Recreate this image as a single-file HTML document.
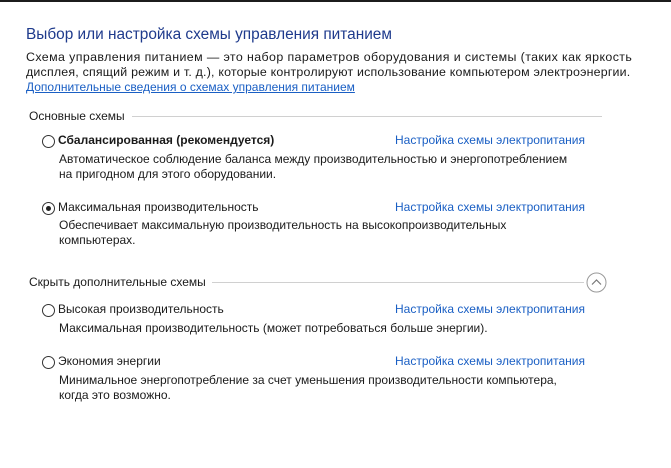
<!DOCTYPE html>
<html><head><meta charset="utf-8"><style>
body{margin:0;width:671px;height:468px;background:#fff;position:relative;overflow:hidden;font-family:"Liberation Sans","DejaVu Sans",sans-serif;font-size:12px;color:#1a1a1a}
.bar{position:absolute;left:0;top:0;width:671px;height:2px;background:#1c1c1c}
.t{position:absolute;white-space:nowrap;line-height:15px}
.h{color:#1e3a8c;font-size:15.4px;line-height:20px}
.p{font-size:12.4px;letter-spacing:0.4px}
.a{color:#1a5fc4}
.u{text-decoration:underline}
.rl{position:absolute;height:1px;background:#d0d0d0}
.r{position:absolute;width:11px;height:11px;border:1px solid #333;border-radius:50%;background:#fff}
.r.on::after{content:"";position:absolute;left:3px;top:3px;width:5px;height:5px;border-radius:50%;background:#222}
</style></head><body>
<div class="bar"></div>
<div class="t h" style="left:26px;top:25px">Выбор или настройка схемы управления питанием</div>
<div class="t p" style="left:26px;top:50px">Схема управления питанием — это набор параметров оборудования и системы (таких как яркость</div>
<div class="t p" style="left:26px;top:65px;letter-spacing:0.2px">дисплея, спящий режим и т. д.), которые контролируют использование компьютером электроэнергии.</div>
<div class="t a u" style="left:26px;top:80px">Дополнительные сведения о схемах управления питанием</div>

<div class="t" style="left:29px;top:109px">Основные схемы</div>
<div class="rl" style="left:132px;top:116px;width:470px"></div>

<div class="r" style="left:42px;top:135px"></div>
<div class="t" style="left:58px;top:133px;font-weight:bold">Сбалансированная (рекомендуется)</div>
<div class="t a" style="left:395px;top:133px">Настройка схемы электропитания</div>
<div class="t" style="left:59px;top:152px">Автоматическое соблюдение баланса между производительностью и энергопотреблением</div>
<div class="t" style="left:59px;top:167px">на пригодном для этого оборудовании.</div>

<div class="r on" style="left:42px;top:202px"></div>
<div class="t" style="left:58px;top:200px">Максимальная производительность</div>
<div class="t a" style="left:395px;top:200px">Настройка схемы электропитания</div>
<div class="t" style="left:59px;top:218px">Обеспечивает максимальную производительность на высокопроизводительных</div>
<div class="t" style="left:59px;top:233px">компьютерах.</div>

<div class="t" style="left:29px;top:275px">Скрыть дополнительные схемы</div>
<div class="rl" style="left:212px;top:282px;width:372px"></div>
<svg style="position:absolute;left:586px;top:272px" width="21" height="21" viewBox="0 0 21 21"><circle cx="10.5" cy="10.5" r="9.5" fill="none" stroke="#9a9a9a"/><path d="M6 12.5 L10.5 8 L15 12.5" fill="none" stroke="#777" stroke-width="1.2"/></svg>

<div class="r" style="left:42px;top:304px"></div>
<div class="t" style="left:58px;top:302px">Высокая производительность</div>
<div class="t a" style="left:395px;top:302px">Настройка схемы электропитания</div>
<div class="t" style="left:59px;top:321px">Максимальная производительность (может потребоваться больше энергии).</div>

<div class="r" style="left:42px;top:356px"></div>
<div class="t" style="left:58px;top:354px">Экономия энергии</div>
<div class="t a" style="left:395px;top:354px">Настройка схемы электропитания</div>
<div class="t" style="left:59px;top:373px">Минимальное энергопотребление за счет уменьшения производительности компьютера,</div>
<div class="t" style="left:59px;top:388px">когда это возможно.</div>
</body></html>
